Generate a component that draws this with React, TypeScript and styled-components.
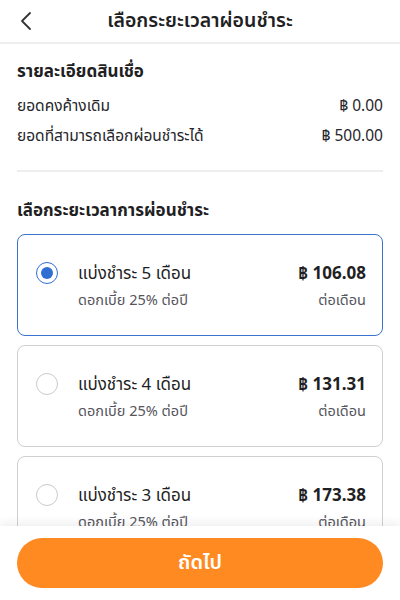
import React, { useState } from "react";
import styled, { createGlobalStyle } from "styled-components";

const Global = createGlobalStyle`
  * { box-sizing: border-box; }
  html, body { margin: 0; padding: 0; background: #fff; }
  body { font-family: "Noto Sans", "Noto Sans Thai", "Open Sans", sans-serif; color: #1f1f24; }
`;

const Page = styled.div`
  width: 400px;
  height: 600px;
  display: flex;
  flex-direction: column;
  overflow: hidden;
  background: #fff;
`;

const Header = styled.header`
  height: 44px;
  flex: 0 0 44px;
  display: grid;
  grid-template-columns: 56px 1fr 56px;
  align-items: center;
  border-bottom: 2px solid #eeeeee;
`;

const BackBtn = styled.button`
  border: none;
  background: none;
  padding: 0 0 0 20px;
  display: flex;
  align-items: center;
  cursor: pointer;
`;

const Title = styled.h1`
  margin: 0;
  text-align: center;
  font-size: 19.5px;
  font-weight: 600;
  color: #1f1f24;
`;

const Content = styled.main`
  flex: 1;
  overflow: hidden;
  padding: 14px 17px 0;
`;

const SectionTitle = styled.h2`
  margin: 0 0 6px;
  font-size: 17px;
  font-weight: 700;
  line-height: 26px;
`;

const InfoRow = styled.div`
  display: flex;
  justify-content: space-between;
  align-items: center;
  font-size: 15.5px;
  line-height: 30px;
  color: #26262b;
`;

const Divider = styled.hr`
  border: none;
  border-top: 2px solid #eeeeee;
  margin: 20px 0 25px;
`;

const CardList = styled.div`
  display: flex;
  flex-direction: column;
  gap: 9px;
  margin-top: 11px;
`;

const Card = styled.label<{ $selected: boolean }>`
  height: 102px;
  border: 1px solid ${(p) => (p.$selected ? "#3a74d0" : "#cfcfd4")};
  border-radius: 8px;
  display: flex;
  align-items: center;
  padding: 0 16px 0 18px;
  cursor: pointer;
  flex: 0 0 auto;
`;

const Radio = styled.span<{ $selected: boolean }>`
  width: 22px;
  height: 22px;
  border-radius: 50%;
  border: 1.5px solid ${(p) => (p.$selected ? "#2f6fd4" : "#cacacf")};
  display: flex;
  align-items: center;
  justify-content: center;
  flex: 0 0 22px;
  margin-right: 20px;
  margin-top: -24px;
  &::after {
    content: "";
    width: 12px;
    height: 12px;
    border-radius: 50%;
    background: ${(p) => (p.$selected ? "#2f6fd4" : "transparent")};
  }
`;

const CardBody = styled.div`
  flex: 1;
  display: grid;
  grid-template-columns: 1fr auto;
`;

const PlanName = styled.div`
  font-size: 17px;
  line-height: 28px;
  color: #1f1f24;
`;

const Price = styled.div`
  font-size: 17px;
  font-weight: 700;
  line-height: 28px;
  text-align: right;
`;

const Sub = styled.div<{ $right?: boolean }>`
  font-size: 14.5px;
  line-height: 24px;
  color: #55555c;
  text-align: ${(p) => (p.$right ? "right" : "left")};
`;

const Footer = styled.footer`
  flex: 0 0 74px;
  padding: 12px 17px;
  background: #fff;
  box-shadow: 0 -4px 8px rgba(0, 0, 0, 0.06);
  position: relative;
`;

const NextButton = styled.button`
  width: 100%;
  height: 50px;
  border: none;
  border-radius: 25px;
  background: #ff8a22;
  color: #fff;
  font-family: inherit;
  font-size: 20px;
  font-weight: 600;
  cursor: pointer;
`;

const plans = [
  { months: 5, price: "106.08" },
  { months: 4, price: "131.31" },
  { months: 3, price: "173.38" },
];

export default function App() {
  const [sel, setSel] = useState(5);
  return (
    <Page>
      <Global />
      <Header>
        <BackBtn aria-label="back">
          <svg width="12" height="20" viewBox="0 0 12 20" fill="none">
            <path d="M10 2 L2 10 L10 18" stroke="#333" strokeWidth="1.8" strokeLinecap="round" strokeLinejoin="round" />
          </svg>
        </BackBtn>
        <Title>เลือกระยะเวลาผ่อนชำระ</Title>
        <span />
      </Header>
      <Content>
        <SectionTitle>รายละเอียดสินเชื่อ</SectionTitle>
        <InfoRow>
          <span>ยอดคงค้างเดิม</span>
          <span>฿ 0.00</span>
        </InfoRow>
        <InfoRow>
          <span>ยอดที่สามารถเลือกผ่อนชำระได้</span>
          <span>฿ 500.00</span>
        </InfoRow>
        <Divider />
        <SectionTitle>เลือกระยะเวลาการผ่อนชำระ</SectionTitle>
        <CardList>
          {plans.map((p) => (
            <Card key={p.months} $selected={sel === p.months} onClick={() => setSel(p.months)}>
              <Radio $selected={sel === p.months} />
              <CardBody>
                <PlanName>แบ่งชำระ {p.months} เดือน</PlanName>
                <Price>฿ {p.price}</Price>
                <Sub>ดอกเบี้ย 25% ต่อปี</Sub>
                <Sub $right>ต่อเดือน</Sub>
              </CardBody>
            </Card>
          ))}
        </CardList>
      </Content>
      <Footer>
        <NextButton>ถัดไป</NextButton>
      </Footer>
    </Page>
  );
}
